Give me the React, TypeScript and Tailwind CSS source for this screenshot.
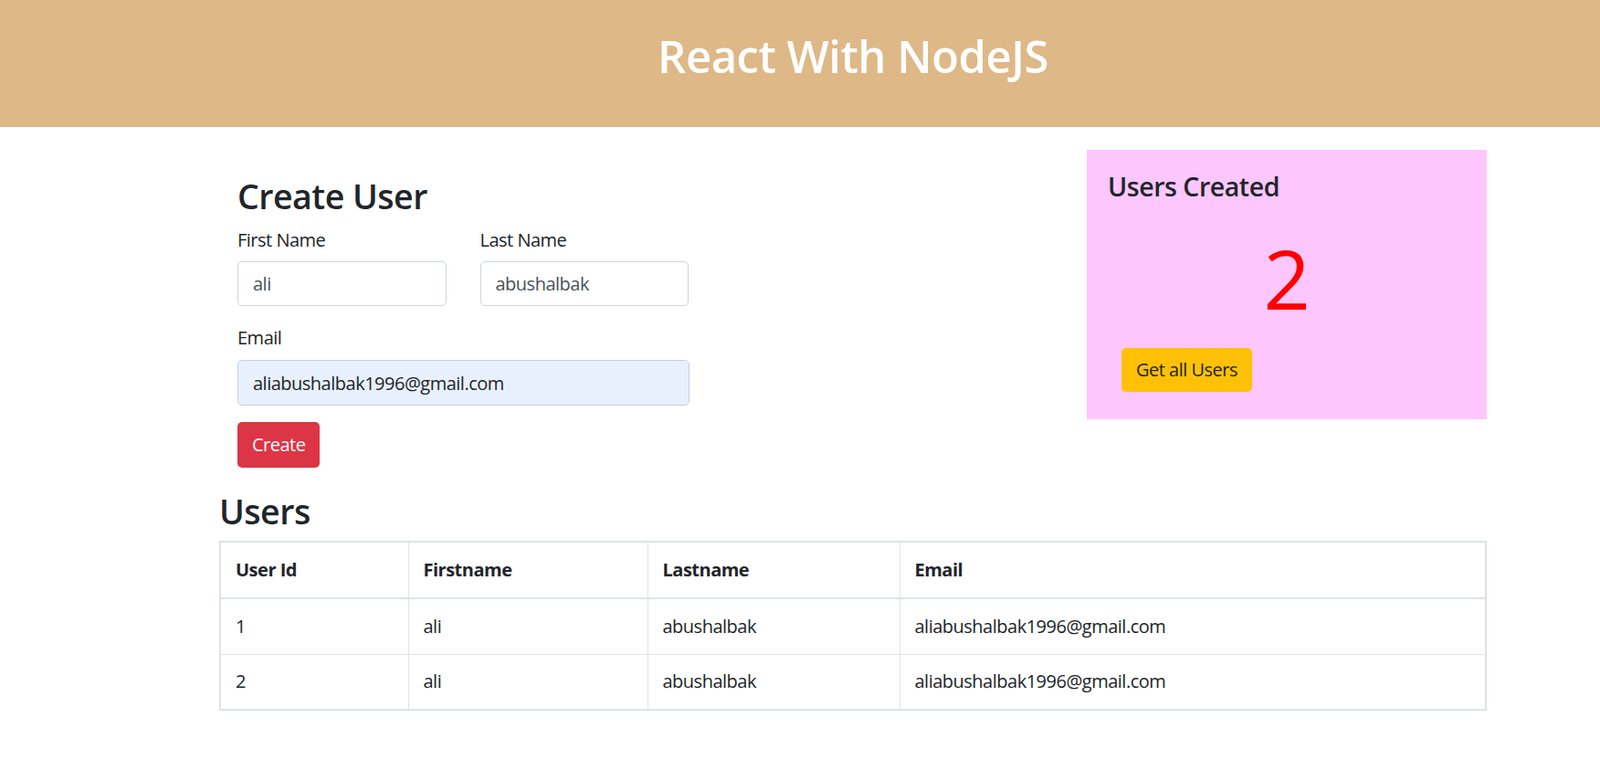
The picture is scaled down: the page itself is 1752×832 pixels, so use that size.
const users = [
  { id: 1, firstname: "ali", lastname: "abushalbak", email: "aliabushalbak1996@gmail.com" },
  { id: 2, firstname: "ali", lastname: "abushalbak", email: "aliabushalbak1996@gmail.com" },
];

function CreateUser() {
  return (
    <div className="pl-[20px] pt-[52px] w-[514px]">
      <h2 className="text-[37.5px] leading-[48px] font-semibold">Create User</h2>
      <div className="flex gap-[37px] mt-[9px]">
        <div className="w-[229px]">
          <label className="block text-[20px] leading-[30px]">First Name</label>
          <input
            defaultValue="ali"
            className="mt-[8px] w-full h-[49px] px-[16px] rounded-[5px] border border-[#ced4da] text-[20px] text-[#495057] outline-none"
          />
        </div>
        <div className="w-[229px]">
          <label className="block text-[20px] leading-[30px]">Last Name</label>
          <input
            defaultValue="abushalbak"
            className="mt-[8px] w-full h-[49px] px-[16px] rounded-[5px] border border-[#ced4da] text-[20px] text-[#495057] outline-none"
          />
        </div>
      </div>
      <label className="block mt-[20px] text-[20px] leading-[30px]">Email</label>
      <input
        defaultValue="aliabushalbak1996@gmail.com"
        className="mt-[9px] w-[495px] h-[50px] px-[16px] rounded-[5px] border border-[#c5d0de] bg-[#e8f0fe] text-[20px] text-[#212529] outline-none"
      />
      <div>
        <button className="mt-[18px] h-[50px] px-[16px] rounded-[5px] bg-[#dc3545] text-white text-[20px]">
          Create
        </button>
      </div>
    </div>
  );
}

function UsersCreated() {
  return (
    <div className="mt-[25px] w-[438px] h-[295px] bg-[#fdc7fe] pt-[22px] px-[23px]">
      <h4 className="text-[28.6px] leading-[36px] font-semibold">Users Created</h4>
      <div className="text-center text-[90px] leading-[100px] text-[#ff0000] mt-[32px]">2</div>
      <button className="ml-[15px] mt-[27px] h-[48px] px-[16px] rounded-[5px] bg-[#ffc107] text-[#212529] text-[20px]">
        Get all Users
      </button>
    </div>
  );
}

function UsersTable() {
  return (
    <div className="mt-[24px]">
      <h2 className="text-[37.5px] leading-[48px] font-semibold">Users</h2>
      <table className="mt-[8px] w-[1388px] border-collapse border-2 border-[#dee2e6] text-[20px]">
        <colgroup>
          <col className="w-[206px]" />
          <col className="w-[262px]" />
          <col className="w-[276px]" />
          <col />
        </colgroup>
        <thead>
          <tr className="h-[62px] border-b-2 border-[#dee2e6]">
            <th className="text-left font-bold px-[16px] border-r border-[#dee2e6]">User Id</th>
            <th className="text-left font-bold px-[16px] border-r border-[#dee2e6]">Firstname</th>
            <th className="text-left font-bold px-[16px] border-r border-[#dee2e6]">Lastname</th>
            <th className="text-left font-bold px-[16px]">Email</th>
          </tr>
        </thead>
        <tbody>
          {users.map((u) => (
            <tr key={u.id} className="h-[61px] border-b border-[#dee2e6]">
              <td className="px-[16px] border-r border-[#dee2e6]">{u.id}</td>
              <td className="px-[16px] border-r border-[#dee2e6]">{u.firstname}</td>
              <td className="px-[16px] border-r border-[#dee2e6]">{u.lastname}</td>
              <td className="px-[16px]">{u.email}</td>
            </tr>
          ))}
        </tbody>
      </table>
    </div>
  );
}

export default function App() {
  return (
    <div className="min-h-screen bg-white text-[#212529] tracking-[-0.5px] font-['Open_Sans',sans-serif]">
      <header className="h-[139px] bg-[#deb887]">
        <div className="ml-[240px] w-[1388px] pt-[26px] text-center">
          <h1 className="text-[49px] leading-[70px] font-semibold text-white">React With NodeJS</h1>
        </div>
      </header>
      <main className="ml-[240px] w-[1388px]">
        <div className="flex justify-between">
          <CreateUser />
          <UsersCreated />
        </div>
        <UsersTable />
      </main>
    </div>
  );
}
